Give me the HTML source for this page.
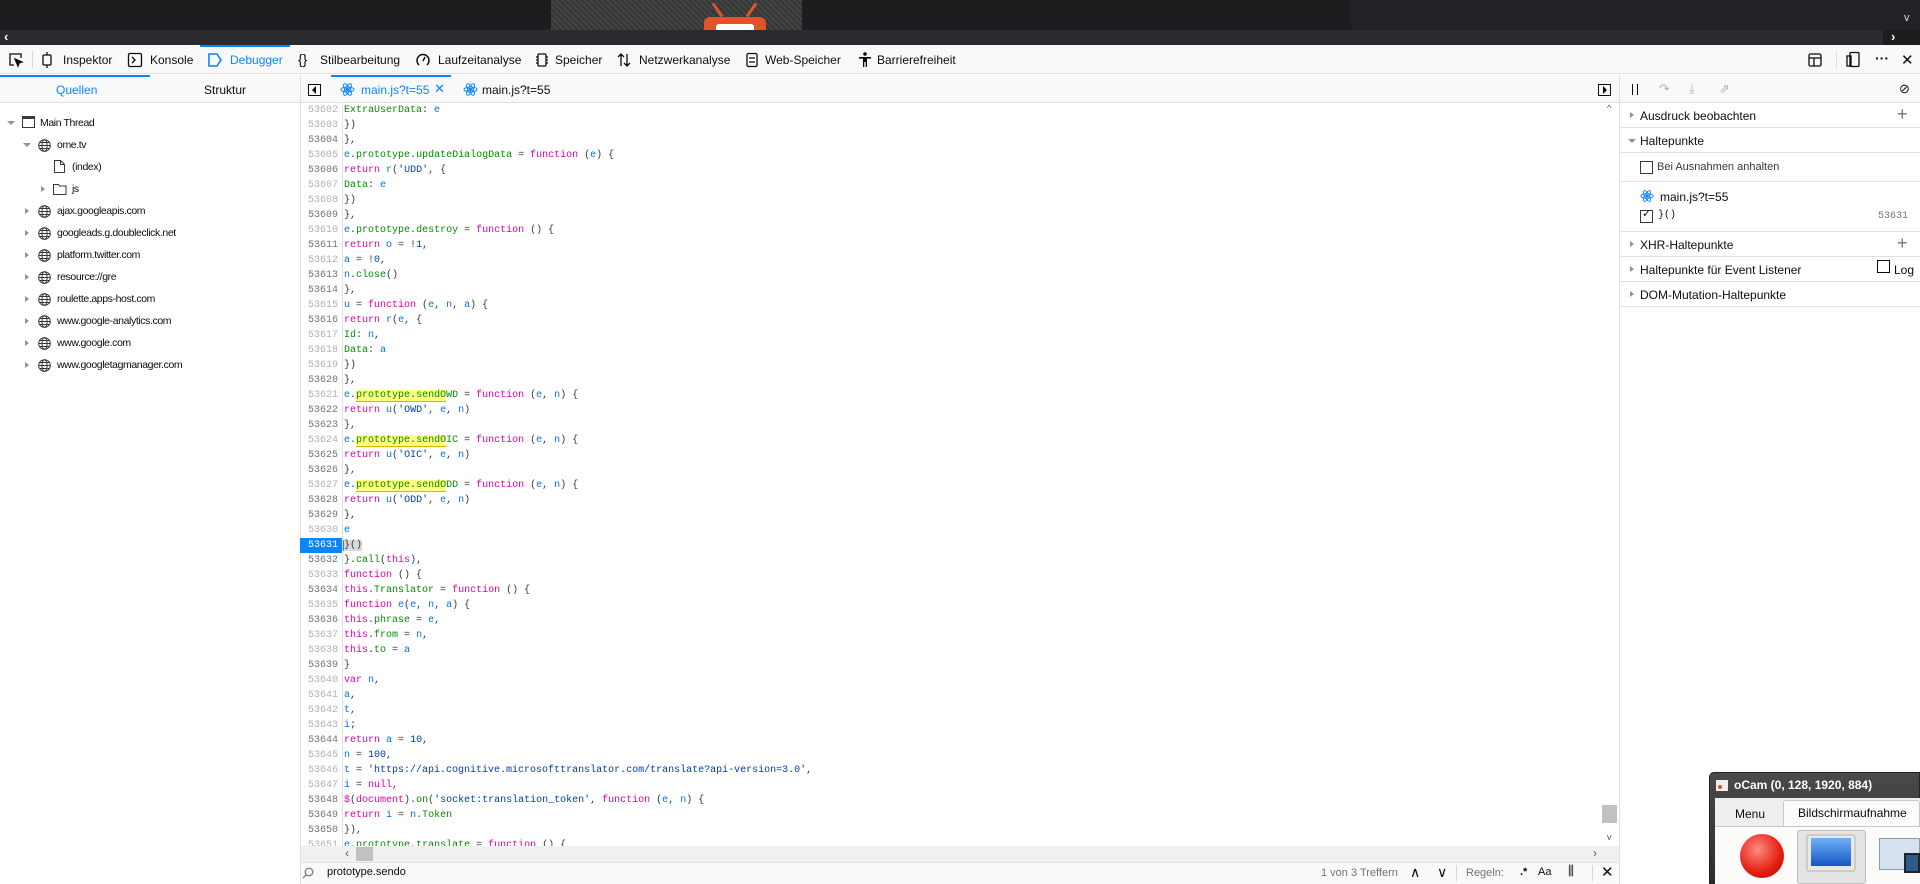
<!DOCTYPE html>
<html><head><meta charset="utf-8"><style>
*{margin:0;padding:0;box-sizing:border-box}
body{width:1920px;height:884px;overflow:hidden;background:#fff;font-family:"Liberation Sans",sans-serif;font-size:12px;color:#0c0c0d;position:relative}
.a{position:absolute}
.t{position:absolute;white-space:nowrap}
.code{position:absolute;left:300px;top:103px;width:1301px;height:759px;overflow:hidden;font-family:"Liberation Mono",monospace;font-size:10px}
.ln{position:absolute;left:0;width:38px;text-align:right;color:#b1b1b3;height:15px;line-height:15px}
.ln.d{color:#737373}
.cl{position:absolute;left:44px;height:15px;line-height:15px;color:#38383d;white-space:pre}
.k{color:#dd00a9}.v{color:#0074e8}.p{color:#058b00}.s{color:#003eaa}
.hl{background:#ffff80;border-bottom:1px solid #d7b600}
.tree .t{font-size:10.5px;letter-spacing:-0.4px;color:#0c0c0d;margin-top:1px}
.rp .t{font-size:12px}
.row{position:absolute;left:1620px;width:300px;border-bottom:1px solid #e0e0e2}
.tri{position:absolute;width:0;height:0;border-left:4px solid #939395;border-top:3.5px solid transparent;border-bottom:3.5px solid transparent}
.trid{position:absolute;width:0;height:0;border-top:4px solid #939395;border-left:4px solid transparent;border-right:4px solid transparent}
</style></head><body>

<div class="a" style="left:0;top:0;width:1920px;height:30px;background:#1d1d20"></div>
<div class="a" style="left:1351px;top:0;width:569px;height:30px;background:#222226"></div>
<div class="a" style="left:551px;top:0;width:251px;height:30px;background:#3b3b3b;background-image:repeating-linear-gradient(45deg,#444 0 2px,#363636 2px 4px)"></div>
<div class="a" style="left:716px;top:2px;width:3px;height:16px;background:#e0532b;transform:rotate(-35deg)"></div>
<div class="a" style="left:750px;top:2px;width:3px;height:16px;background:#e0532b;transform:rotate(35deg)"></div>
<div class="a" style="left:704px;top:17px;width:62px;height:14px;background:#e0532b;border-radius:6px 6px 0 0"></div>
<div class="a" style="left:716px;top:24px;width:38px;height:6px;background:#fff;border-radius:3px 3px 0 0"></div>
<div class="t" style="left:1904px;top:12px;color:#ddd;font-size:11px">v</div>
<div class="a" style="left:0;top:30px;width:1920px;height:15px;background:#2b2b2f"></div>
<div class="a" style="left:1883px;top:30px;width:37px;height:15px;background:#1d1d20"></div>
<div class="t" style="left:4px;top:29px;color:#fff;font-size:13px;font-weight:bold">‹</div>
<div class="t" style="left:1891px;top:29px;color:#fff;font-size:13px;font-weight:bold">›</div>

<div class="a" style="left:0;top:45px;width:1920px;height:29px;background:#f9f9fa;border-bottom:1px solid #e0e0e2"></div>
<div class="a" style="left:200px;top:45px;width:90px;height:2px;background:#0a84ff"></div>
<svg class="a" style="left:8px;top:52px" width="16" height="16" viewBox="0 0 16 16" fill="none" stroke="#0c0c0d" stroke-width="1.3"><path d="M6 13H2V2h11v4"/><path d="M7 7l7 3-3 1-1 3z" fill="#0c0c0d"/></svg>
<div class="a" style="left:32px;top:51px;width:1px;height:17px;background:#d7d7db"></div>
<svg class="a" style="left:40px;top:52px" width="14" height="16" viewBox="0 0 14 16" fill="none" stroke="#0c0c0d" stroke-width="1.3"><rect x="3" y="3" width="8" height="10" rx="1"/><path d="M7 0v3M7 13v3"/></svg>
<div class="t" style="left:63px;top:53px">Inspektor</div>
<svg class="a" style="left:127px;top:52px" width="16" height="16" viewBox="0 0 16 16" fill="none" stroke="#0c0c0d" stroke-width="1.3"><rect x="1.5" y="1.5" width="13" height="13" rx="1.5"/><path d="M5 5l3 3-3 3"/></svg>
<div class="t" style="left:150px;top:53px">Konsole</div>
<svg class="a" style="left:207px;top:52px" width="16" height="16" viewBox="0 0 16 16" fill="none" stroke="#0a84ff" stroke-width="1.6"><path d="M2 2h8l4 6-4 6H2z"/></svg>
<div class="t" style="left:230px;top:53px;color:#0a84ff">Debugger</div>
<div class="t" style="left:298px;top:51px;font-size:14px">{}</div>
<div class="t" style="left:320px;top:53px">Stilbearbeitung</div>
<svg class="a" style="left:415px;top:52px" width="16" height="16" viewBox="0 0 16 16" fill="none" stroke="#0c0c0d" stroke-width="1.5"><path d="M4 13A6 6 0 1 1 12 13"/><path d="M8 9l2-4"/></svg>
<div class="t" style="left:438px;top:53px">Laufzeitanalyse</div>
<svg class="a" style="left:534px;top:52px" width="16" height="16" viewBox="0 0 16 16" fill="none" stroke="#0c0c0d" stroke-width="1.3"><rect x="4" y="2" width="8" height="12" rx="1"/><path d="M2 5h2M2 8h2M2 11h2M12 5h2M12 8h2M12 11h2"/></svg>
<div class="t" style="left:555px;top:53px">Speicher</div>
<svg class="a" style="left:616px;top:52px" width="16" height="16" viewBox="0 0 16 16" fill="none" stroke="#0c0c0d" stroke-width="1.3"><path d="M5 14V2M2 5l3-3 3 3M11 2v12M8 11l3 3 3-3"/></svg>
<div class="t" style="left:639px;top:53px">Netzwerkanalyse</div>
<svg class="a" style="left:744px;top:52px" width="16" height="16" viewBox="0 0 16 16" fill="none" stroke="#0c0c0d" stroke-width="1.3"><rect x="3" y="1.5" width="10" height="13" rx="1.5"/><path d="M5 6h6M5 10h6"/></svg>
<div class="t" style="left:765px;top:53px">Web-Speicher</div>
<svg class="a" style="left:858px;top:52px" width="14" height="16" viewBox="0 0 14 16" fill="#0c0c0d"><circle cx="7" cy="2" r="1.8"/><path d="M1 5h12v1.6H9V15H7.7v-5H6.3v5H5V6.6H1z"/></svg>
<div class="t" style="left:877px;top:53px">Barrierefreiheit</div>
<svg class="a" style="left:1807px;top:52px" width="16" height="16" viewBox="0 0 16 16" fill="none" stroke="#0c0c0d" stroke-width="1.3"><rect x="2" y="2" width="12" height="12" rx="1.5"/><path d="M2 6h12M7 6v8"/></svg>
<div class="a" style="left:1836px;top:50px;width:1px;height:19px;background:#e0e0e2"></div>
<svg class="a" style="left:1845px;top:51px" width="16" height="17" viewBox="0 0 16 17" fill="none" stroke="#0c0c0d" stroke-width="1.3"><rect x="5" y="1.5" width="9" height="14" rx="1"/><rect x="2" y="5" width="4" height="10"/></svg>
<div class="t" style="left:1875px;top:50px;font-size:14px;font-weight:bold">···</div>
<div class="t" style="left:1901px;top:51px;font-size:15px">✕</div>

<div class="a" style="left:0;top:75px;width:1920px;height:28px;background:#f9f9fa;border-bottom:1px solid #e0e0e2"></div>
<div class="a" style="left:0;top:75px;width:150px;height:2px;background:#0a84ff"></div>
<div class="t" style="left:56px;top:83px;color:#0a84ff">Quellen</div>
<div class="t" style="left:204px;top:83px">Struktur</div>
<div class="a" style="left:300px;top:75px;width:1px;height:809px;background:#e0e0e2"></div>
<div class="a" style="left:331px;top:75px;width:120px;height:2px;background:#0a84ff"></div>
<div class="a" style="left:308px;top:84px;width:13px;height:12px;border:1px solid #0c0c0d"></div>
<div class="a" style="left:312px;top:86px;width:0;height:0;border-right:4px solid #0c0c0d;border-top:4px solid transparent;border-bottom:4px solid transparent"></div>
<svg class="a" style="left:340px;top:82px" width="15" height="15" viewBox="0 0 16 16" fill="none" stroke="#0a84ff" stroke-width="1"><ellipse cx="8" cy="8" rx="7" ry="2.7"/><ellipse cx="8" cy="8" rx="7" ry="2.7" transform="rotate(60 8 8)"/><ellipse cx="8" cy="8" rx="7" ry="2.7" transform="rotate(120 8 8)"/><circle cx="8" cy="8" r="1.3" fill="#0a84ff"/></svg>
<div class="t" style="left:361px;top:83px;color:#0a84ff">main.js?t=55</div>
<div class="t" style="left:434px;top:81px;color:#0a84ff;font-size:13px">✕</div>
<svg class="a" style="left:463px;top:82px" width="15" height="15" viewBox="0 0 16 16" fill="none" stroke="#0a84ff" stroke-width="1"><ellipse cx="8" cy="8" rx="7" ry="2.7"/><ellipse cx="8" cy="8" rx="7" ry="2.7" transform="rotate(60 8 8)"/><ellipse cx="8" cy="8" rx="7" ry="2.7" transform="rotate(120 8 8)"/><circle cx="8" cy="8" r="1.3" fill="#0a84ff"/></svg>
<div class="t" style="left:482px;top:83px">main.js?t=55</div>
<div class="a" style="left:1598px;top:84px;width:13px;height:12px;border:1px solid #0c0c0d"></div>
<div class="a" style="left:1603px;top:86px;width:0;height:0;border-left:4px solid #0c0c0d;border-top:4px solid transparent;border-bottom:4px solid transparent"></div>
<div class="a" style="left:1619px;top:75px;width:1px;height:809px;background:#e0e0e2"></div>
<div class="a" style="left:1632px;top:84px;width:1px;height:11px;background:#0c0c0d"></div>
<div class="a" style="left:1637px;top:84px;width:1px;height:11px;background:#0c0c0d"></div>
<div class="t" style="left:1659px;top:81px;color:#b1b1b3;font-size:13px">↷</div>
<div class="t" style="left:1689px;top:81px;color:#b1b1b3;font-size:13px">⤓</div>
<div class="t" style="left:1719px;top:81px;color:#b1b1b3;font-size:13px">⇗</div>
<div class="t" style="left:1899px;top:81px;font-size:13px">⊘</div>

<div class="tree">
<div class="trid" style="left:7px;top:121px"></div>
<div class="a" style="left:22px;top:116px;width:13px;height:12px;border:1px solid #38383d;border-top-width:3px"></div>
<div class="t" style="left:40px;top:116px">Main Thread</div>
<div class="trid" style="left:23px;top:143px"></div>
<div class="t" style="left:57px;top:138px">ome.tv</div>
<svg class="a" style="left:54px;top:160px" width="11" height="13" viewBox="0 0 11 13" fill="none" stroke="#38383d"><path d="M.5.5h6l4 4v8h-10z M6.5.5v4h4"/></svg>
<div class="t" style="left:72px;top:160px">(index)</div>
<div class="tri" style="left:41px;top:186px"></div>
<svg class="a" style="left:53px;top:183px" width="14" height="12" viewBox="0 0 14 12" fill="none" stroke="#38383d"><path d="M.5 1.5h5l1 1.5h6.5v8.5H.5z"/></svg>
<div class="t" style="left:72px;top:182px">js</div>
</div>
<div class="tree" id="doms"></div>

<div class="code" id="code"></div>
<div class="a" style="left:300px;top:103px;width:43px;height:759px;border-right:1px solid #e0e0e2"></div>

<div class="a" style="left:1601px;top:103px;width:18px;height:743px;background:#fff"></div>
<div class="t" style="left:1607px;top:103px;font-size:9px;color:#555">^</div>
<div class="a" style="left:1602px;top:805px;width:15px;height:18px;background:#c1c1c1"></div>
<div class="t" style="left:1607px;top:832px;font-size:9px;color:#555">v</div>
<div class="a" style="left:301px;top:846px;width:1318px;height:16px;background:#f0f0f0"></div>
<div class="t" style="left:345px;top:846px;font-size:12px;color:#555">‹</div>
<div class="a" style="left:356px;top:847px;width:17px;height:14px;background:#c1c1c1"></div>
<div class="t" style="left:1593px;top:846px;font-size:12px;color:#555">›</div>
<div class="a" style="left:301px;top:862px;width:1318px;height:22px;background:#f9f9fa;border-top:1px solid #e0e0e2"></div>
<svg class="a" style="left:302px;top:867px" width="12" height="12" viewBox="0 0 12 12" fill="none" stroke="#737373" stroke-width="1.2"><circle cx="7" cy="5" r="3.8"/><path d="M4.3 7.7L1 11"/></svg>
<div class="t" style="left:327px;top:866px;font-size:11px">prototype.sendo</div>
<div class="t" style="left:1321px;top:867px;font-size:11px;color:#737373">1 von 3 Treffern</div>
<div class="t" style="left:1410px;top:864px;font-size:14px">∧</div>
<div class="t" style="left:1437px;top:864px;font-size:14px">∨</div>
<div class="a" style="left:1456px;top:865px;width:1px;height:16px;background:#d7d7db"></div>
<div class="t" style="left:1466px;top:867px;font-size:11px;color:#737373">Regeln:</div>
<div class="t" style="left:1520px;top:866px;font-size:11px;font-weight:bold">.*</div>
<div class="t" style="left:1538px;top:866px;font-size:11px">Aa</div>
<div class="t" style="left:1568px;top:863px;font-size:13px">⫼</div>
<div class="a" style="left:1592px;top:865px;width:1px;height:16px;background:#d7d7db"></div>
<div class="t" style="left:1601px;top:863px;font-size:15px">✕</div>

<div class="rp">
<div class="row" style="top:103px;height:25px"></div>
<div class="tri" style="left:1630px;top:112px"></div>
<div class="t" style="left:1640px;top:109px">Ausdruck beobachten</div>
<div class="t" style="left:1897px;top:104px;font-size:18px;color:#737373">+</div>
<div class="row" style="top:128px;height:25px"></div>
<div class="trid" style="left:1628px;top:139px"></div>
<div class="t" style="left:1640px;top:134px">Haltepunkte</div>
<div class="row" style="top:153px;height:29px"></div>
<div class="a" style="left:1640px;top:161px;width:13px;height:13px;border:1px solid #38383d"></div>
<div class="t" style="left:1657px;top:161px;font-size:11px;color:#38383d">Bei Ausnahmen anhalten</div>
<div class="row" style="top:182px;height:50px"></div>
<svg class="a" style="left:1640px;top:189px" width="14" height="14" viewBox="0 0 16 16" fill="none" stroke="#0a84ff" stroke-width="1"><ellipse cx="8" cy="8" rx="7" ry="2.7"/><ellipse cx="8" cy="8" rx="7" ry="2.7" transform="rotate(60 8 8)"/><ellipse cx="8" cy="8" rx="7" ry="2.7" transform="rotate(120 8 8)"/><circle cx="8" cy="8" r="1.3" fill="#0a84ff"/></svg>
<div class="t" style="left:1660px;top:190px">main.js?t=55</div>
<div class="a" style="left:1640px;top:210px;width:13px;height:13px;border:1px solid #38383d"></div>
<div class="t" style="left:1642px;top:207px;font-size:11px">✓</div>
<div class="t" style="left:1658px;top:210px;font-family:'Liberation Mono',monospace;font-size:10px">}()</div>
<div class="t" style="left:1878px;top:211px;font-family:'Liberation Mono',monospace;font-size:10px;color:#737373">53631</div>
<div class="row" style="top:232px;height:25px"></div>
<div class="tri" style="left:1630px;top:241px"></div>
<div class="t" style="left:1640px;top:238px">XHR-Haltepunkte</div>
<div class="t" style="left:1897px;top:233px;font-size:18px;color:#737373">+</div>
<div class="row" style="top:257px;height:25px"></div>
<div class="tri" style="left:1630px;top:266px"></div>
<div class="t" style="left:1640px;top:263px">Haltepunkte für Event Listener</div>
<div class="a" style="left:1877px;top:260px;width:13px;height:13px;border:1px solid #0c0c0d"></div>
<div class="t" style="left:1894px;top:263px">Log</div>
<div class="row" style="top:282px;height:25px"></div>
<div class="tri" style="left:1630px;top:291px"></div>
<div class="t" style="left:1640px;top:288px">DOM-Mutation-Haltepunkte</div>
</div>

<div class="a" style="left:1709px;top:772px;width:211px;height:112px;background:linear-gradient(#4a4a4a,#2c2c2c);border-radius:5px 0 0 0;border:1px solid #222"></div>
<div class="a" style="left:1716px;top:780px;width:12px;height:11px;background:#eee"></div>
<div class="a" style="left:1718px;top:785px;width:4px;height:4px;background:#e05020;border-radius:50%"></div>
<div class="t" style="left:1734px;top:778px;color:#fff;font-weight:bold;font-size:12px">oCam (0, 128, 1920, 884)</div>
<div class="a" style="left:1715px;top:798px;width:205px;height:86px;background:#f0efed"></div>
<div class="a" style="left:1783px;top:800px;width:137px;height:28px;background:#fbfbfa;border:1px solid #c8c8c8;border-bottom:none;border-radius:3px 3px 0 0"></div>
<div class="t" style="left:1735px;top:807px;font-size:12px">Menu</div>
<div class="t" style="left:1798px;top:806px;font-size:12px">Bildschirmaufnahme</div>
<div class="a" style="left:1715px;top:826px;width:205px;height:58px;background:#fbfbfa;border-top:1px solid #c8c8c8"></div>
<div class="a" style="left:1740px;top:834px;width:44px;height:44px;border-radius:50%;background:radial-gradient(circle at 40% 35%,#ff8a80,#e41c10 60%,#a80c05)"></div>
<div class="a" style="left:1797px;top:830px;width:69px;height:54px;background:#e4e4e4;border:1px solid #bdbdbd;border-radius:3px"></div>
<div class="a" style="left:1806px;top:834px;width:50px;height:38px;background:#e8e8e8;border:2px solid #ccc;border-radius:3px"></div>
<div class="a" style="left:1811px;top:838px;width:40px;height:28px;background:linear-gradient(#6fb0f5,#1458c8)"></div>
<div class="a" style="left:1879px;top:838px;width:41px;height:32px;background:#d6e2ee;border:1px solid #8a9cb0"></div>
<div class="a" style="left:1904px;top:853px;width:16px;height:20px;background:#2a5d8a;border:2px solid #222"></div>

<script>
var doms=["ajax.googleapis.com","googleads.g.doubleclick.net","platform.twitter.com","resource://gre","roulette.apps-host.com","www.google-analytics.com","www.google.com","www.googletagmanager.com"];
var G=function(y){return '<svg class="a" style="left:38px;top:'+y+'px" width="13" height="13" viewBox="0 0 13 13" fill="none" stroke="#38383d"><circle cx="6.5" cy="6.5" r="5.8"/><ellipse cx="6.5" cy="6.5" rx="2.6" ry="5.8"/><path d="M.7 6.5h11.6M1.7 3.5h9.6M1.7 9.5h9.6"/></svg>';};
var h=G(139);doms.forEach(function(d,i){var y=204+22*i;
h+='<div class="tri" style="left:25px;top:'+(y+4)+'px"></div>'+G(y+1)+'<div class="t" style="left:57px;top:'+y+'px">'+d+'</div>';});
document.getElementById('doms').innerHTML=h;
function K(s){return '<span class="k">'+s+'</span>'}function V(s){return '<span class="v">'+s+'</span>'}function P(s){return '<span class="p">'+s+'</span>'}function S(s){return '<span class="s">'+s+'</span>'}
var HL='<span class="hl">'+P('prototype')+'.'+P('sendO')+'</span>';
var L=[
P('ExtraUserData')+': '+V('e'),'})','},',
V('e')+'.'+P('prototype')+'.'+P('updateDialogData')+' = '+K('function')+' ('+V('e')+') {',
K('return')+' '+V('r')+'('+S("'UDD'")+', {',P('Data')+': '+V('e'),'})','},',
V('e')+'.'+P('prototype')+'.'+P('destroy')+' = '+K('function')+' () {',
K('return')+' '+V('o')+' = !'+S('1')+',',V('a')+' = !'+S('0')+',',V('n')+'.'+P('close')+'()','},',
V('u')+' = '+K('function')+' ('+V('e')+', '+V('n')+', '+V('a')+') {',
K('return')+' '+V('r')+'('+V('e')+', {',P('Id')+': '+V('n')+',',P('Data')+': '+V('a'),'})','},',
V('e')+'.'+HL+P('WD')+' = '+K('function')+' ('+V('e')+', '+V('n')+') {',
K('return')+' '+V('u')+'('+S("'OWD'")+', '+V('e')+', '+V('n')+')','},',
V('e')+'.'+HL+P('IC')+' = '+K('function')+' ('+V('e')+', '+V('n')+') {',
K('return')+' '+V('u')+'('+S("'OIC'")+', '+V('e')+', '+V('n')+')','},',
V('e')+'.'+HL+P('DD')+' = '+K('function')+' ('+V('e')+', '+V('n')+') {',
K('return')+' '+V('u')+'('+S("'ODD'")+', '+V('e')+', '+V('n')+')','},',
V('e'),
'<span style="background:#d7d7db">}()</span>',
'}.'+P('call')+'('+K('this')+'),',
K('function')+' () {',
K('this')+'.'+P('Translator')+' = '+K('function')+' () {',
K('function')+' '+V('e')+'('+V('e')+', '+V('n')+', '+V('a')+') {',
K('this')+'.'+P('phrase')+' = '+V('e')+',',K('this')+'.'+P('from')+' = '+V('n')+',',K('this')+'.'+P('to')+' = '+V('a'),'}',
K('var')+' '+V('n')+',',V('a')+',',V('t')+',',V('i')+';',
K('return')+' '+V('a')+' = '+S('10')+',',V('n')+' = '+S('100')+',',
V('t')+' = '+S("'https://api.cognitive.microsofttranslator.com/translate?api-version=3.0'")+',',
V('i')+' = '+K('null')+',',
K('$')+'('+K('document')+').'+P('on')+'('+S("'socket:translation_token'")+', '+K('function')+' ('+V('e')+', '+V('n')+') {',
K('return')+' '+V('i')+' = '+V('n')+'.'+P('Token'),'}),',
V('e')+'.'+P('prototype')+'.'+P('translate')+' = '+K('function')+' () {',''];
var dark=[4,6,9,11,13,14,16,20,22,23,25,26,28,29,32,34,36,39,44,48,49,50];
h="";L.forEach(function(c,i){var n=53602+i,y=15*i;
if(n==53631){h+='<svg class="a" style="left:0;top:'+y+'px" width="48" height="15"><path d="M0 0h42l5 7.5-5 7.5H0z" fill="#0a84ff"/></svg><div class="ln" style="top:'+y+'px;color:#fff">'+n+'</div>';}
else h+='<div class="ln'+(dark.indexOf(n-53600)>=0?' d':'')+'" style="top:'+y+'px">'+n+'</div>';
h+='<div class="cl" style="top:'+y+'px">'+c+'</div>';});
document.getElementById('code').innerHTML=h;
</script>
</body></html>
